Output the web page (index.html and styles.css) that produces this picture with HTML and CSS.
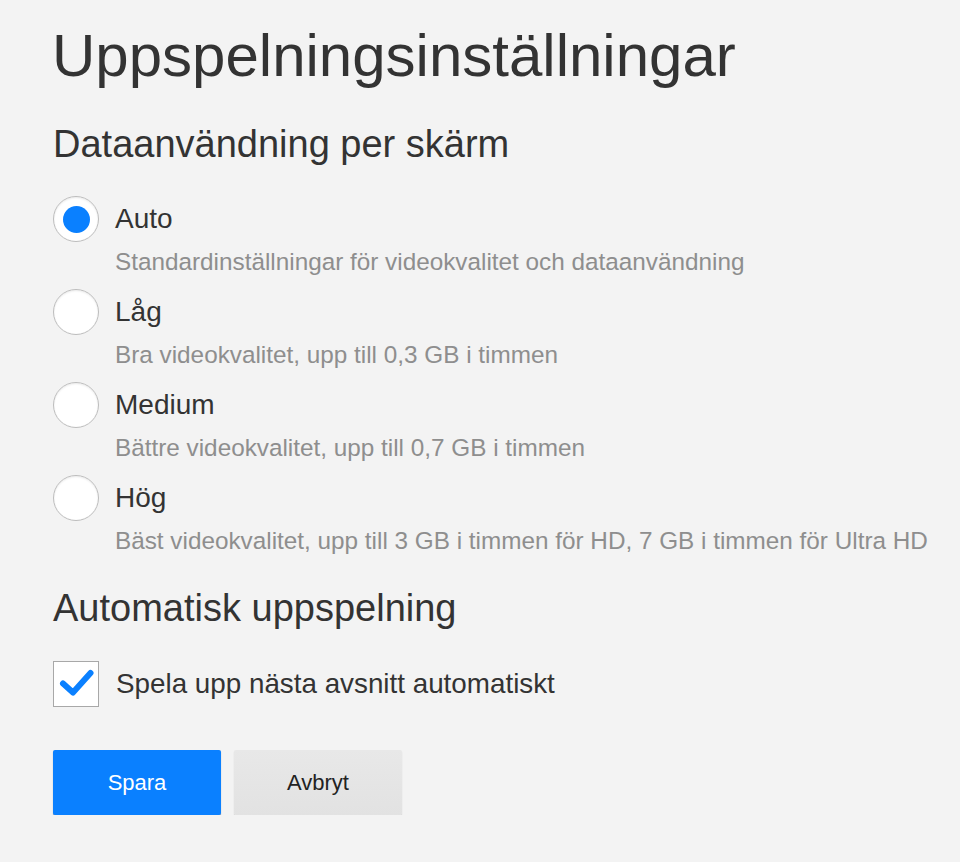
FILE: index.html
```html
<!DOCTYPE html>
<html lang="sv">
<head>
<meta charset="utf-8">
<title>Uppspelningsinställningar</title>
<link rel="stylesheet" href="styles.css">
</head>
<body>
<main class="page">
  <h1 class="title">Uppspelningsinställningar</h1>

  <h2 class="section-title">Dataanvändning per skärm</h2>
  <div class="options">
    <div class="option">
      <span class="radio radio-checked"></span>
      <div class="option-label">Auto</div>
      <div class="option-desc">Standardinställningar för videokvalitet och dataanvändning</div>
    </div>
    <div class="option">
      <span class="radio"></span>
      <div class="option-label">Låg</div>
      <div class="option-desc">Bra videokvalitet, upp till 0,3 GB i timmen</div>
    </div>
    <div class="option">
      <span class="radio"></span>
      <div class="option-label">Medium</div>
      <div class="option-desc">Bättre videokvalitet, upp till 0,7 GB i timmen</div>
    </div>
    <div class="option">
      <span class="radio"></span>
      <div class="option-label">Hög</div>
      <div class="option-desc">Bäst videokvalitet, upp till 3 GB i timmen för HD, 7 GB i timmen för Ultra HD</div>
    </div>
  </div>

  <h2 class="section-title section-autoplay">Automatisk uppspelning</h2>
  <div class="check-row">
    <span class="checkbox">
      <svg width="46" height="46" viewBox="0 0 46 46" aria-hidden="true">
        <path d="M10 22.5 L20 31.5 L37.5 12" fill="none" stroke="#0a80ff" stroke-width="6" stroke-linecap="round" stroke-linejoin="round"/>
      </svg>
    </span>
    <span class="check-label">Spela upp nästa avsnitt automatiskt</span>
  </div>

  <div class="actions">
    <button class="btn btn-primary">Spara</button>
    <button class="btn btn-secondary">Avbryt</button>
  </div>
</main>
</body>
</html>
```
FILE: styles.css
```css
html, body {
  margin: 0;
  padding: 0;
  background: #f3f3f3;
}

body {
  font-family: "Liberation Sans", Arial, Helvetica, sans-serif;
  color: #333333;
}

.page {
  padding: 20px 0 0 52px;
}

.title {
  margin: 0;
  font-size: 60px;
  font-weight: normal;
  line-height: 72px;
  color: #333333;
}

.section-title {
  margin: 29px 0 0 1px;
  font-size: 38px;
  font-weight: normal;
  line-height: 46px;
  color: #333333;
}

.options {
  margin-top: 29px;
  display: flex;
  flex-direction: column;
}

.option {
  display: grid;
  grid-template-columns: 46px 1fr;
  column-gap: 17px;
  padding-bottom: 12px;
}

.radio {
  grid-row: 1;
  grid-column: 1;
  width: 44px;
  height: 44px;
  margin-left: 1px;
  border: 1px solid #bdbdbd;
  border-radius: 50%;
  background: #ffffff;
  box-shadow: inset 0 1px 2px rgba(0, 0, 0, 0.08);
  display: flex;
  align-items: center;
  justify-content: center;
}

.radio-checked::after {
  content: "";
  width: 27px;
  height: 27px;
  border-radius: 50%;
  background: #0a80ff;
}

.option-label {
  grid-row: 1;
  grid-column: 2;
  font-size: 28px;
  line-height: 46px;
  color: #333333;
}

.option-desc {
  grid-row: 2;
  grid-column: 2;
  margin-top: 5px;
  font-size: 24.3px;
  line-height: 30px;
  color: #8e8e8e;
}

.section-autoplay {
  margin-top: 17px;
}

.check-row {
  margin-top: 30px;
  display: flex;
  align-items: center;
  gap: 17px;
  margin-left: 1px;
}

.checkbox {
  width: 44px;
  height: 44px;
  border: 1px solid #a8a8a8;
  background: #ffffff;
  display: flex;
  align-items: center;
  justify-content: center;
  overflow: hidden;
}

.checkbox svg {
  display: block;
  flex: none;
}

.check-label {
  font-size: 27.8px;
  line-height: 46px;
  color: #333333;
}

.actions {
  margin-top: 43px;
  margin-left: 1px;
  display: flex;
  gap: 13px;
}

.btn {
  width: 168px;
  height: 65px;
  border: none;
  border-radius: 2px;
  font-family: "Liberation Sans", Arial, Helvetica, sans-serif;
  font-size: 22px;
  padding: 0;
  cursor: pointer;
}

.btn-primary {
  background: #0a80ff;
  color: #ffffff;
  box-shadow: 0 1px 1px rgba(0, 0, 0, 0.35);
}

.btn-secondary {
  background: linear-gradient(#e8e8e8, #e2e2e2);
  color: #222222;
  box-shadow: 0 1px 1px rgba(0, 0, 0, 0.2);
}
```
